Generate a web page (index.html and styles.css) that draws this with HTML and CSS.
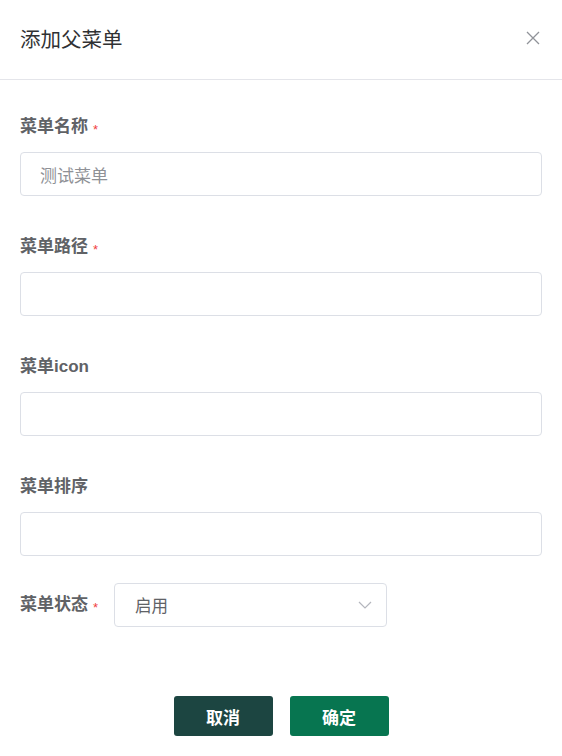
FILE: index.html
```html
<!DOCTYPE html>
<html lang="zh">
<head>
<meta charset="utf-8">
<link rel="stylesheet" href="styles.css">
</head>
<body>
<div class="dialog">
  <div class="dialog-header">
    <span class="dialog-title">添加父菜单</span>
    <svg class="close-icon" viewBox="0 0 14 14" width="14" height="14"><path d="M1 1L13 13M13 1L1 13" stroke="#909399" stroke-width="1.3" fill="none"/></svg>
  </div>
  <div class="dialog-body">
    <div class="form-item">
      <label class="form-label required">菜单名称</label>
      <input class="form-input" type="text" placeholder="测试菜单">
    </div>
    <div class="form-item">
      <label class="form-label required">菜单路径</label>
      <input class="form-input" type="text">
    </div>
    <div class="form-item">
      <label class="form-label">菜单icon</label>
      <input class="form-input" type="text">
    </div>
    <div class="form-item">
      <label class="form-label">菜单排序</label>
      <input class="form-input" type="text">
    </div>
    <div class="form-item inline">
      <label class="form-label required">菜单状态</label>
      <div class="select">
        <span class="select-text">启用</span>
        <svg class="chevron" viewBox="0 0 14 8" width="14" height="8"><path d="M1 1L7 7L13 1" stroke="#b4b6bd" stroke-width="1.2" fill="none"/></svg>
      </div>
    </div>
  </div>
  <div class="dialog-footer">
    <button class="btn btn-cancel">取消</button>
    <button class="btn btn-ok">确定</button>
  </div>
</div>
</body>
</html>
```
FILE: styles.css
```css
* { box-sizing: border-box; }
html, body { margin: 0; padding: 0; background: #fff; }
body {
  font-family: "Liberation Sans", "Noto Sans CJK SC", sans-serif;
  width: 562px;
  height: 756px;
  overflow: hidden;
}
.dialog { width: 562px; }
.dialog-header {
  height: 80px;
  border-bottom: 1px solid #e4e5ea;
  display: flex;
  align-items: center;
  justify-content: space-between;
  padding: 0 22px 4px 20px;
}
.dialog-title {
  font-size: 20.5px;
  line-height: 24px;
  color: #303133;
  font-family: "Noto Sans CJK SC", sans-serif;
}
.close-icon { display: block; }
.dialog-body { padding: 35px 20px 0 20px; }
.form-item {
  display: flex;
  flex-direction: column;
  margin-bottom: 39px;
}
.form-label {
  display: block;
  height: 24px;
  font-size: 17px;
  line-height: 24px;
  font-weight: bold;
  color: #606266;
  margin-bottom: 13px;
  white-space: nowrap;
}
.form-label.required::after {
  content: "*";
  color: #f03e3e;
  font-size: 13px;
  font-weight: normal;
  margin-left: 5px;
  vertical-align: -2px;
}
.form-input {
  display: block;
  width: 522px;
  height: 44px;
  border: 1px solid #dcdfe6;
  border-radius: 4px;
  padding: 0 19px;
  font-size: 17px;
  font-family: "Noto Sans CJK SC", sans-serif;
  color: #606266;
  outline: none;
  background: #fff;
}
.form-input::placeholder { color: #8f9196; }
.form-item.inline {
  flex-direction: row;
  align-items: center;
  margin-top: -12px;
  margin-bottom: 0;
}
.form-item.inline .form-label {
  margin-bottom: 0;
  width: 94px;
}
.select {
  width: 273px;
  height: 44px;
  border: 1px solid #dcdfe6;
  border-radius: 4px;
  display: flex;
  align-items: center;
  justify-content: space-between;
  padding: 0 14px 0 20px;
}
.select-text {
  font-size: 16.5px;
  color: #606266;
  font-family: "Noto Sans CJK SC", sans-serif;
}
.chevron { display: block; }
.dialog-footer {
  display: flex;
  justify-content: center;
  gap: 17px;
  padding-top: 69px;
}
.btn {
  width: 99px;
  height: 40px;
  border: none;
  border-radius: 3px;
  color: #fff;
  font-size: 17px;
  font-weight: bold;
  font-family: "Noto Sans CJK SC", sans-serif;
  cursor: pointer;
}
.btn-cancel { background: #1c4541; }
.btn-ok { background: #077550; }
```
